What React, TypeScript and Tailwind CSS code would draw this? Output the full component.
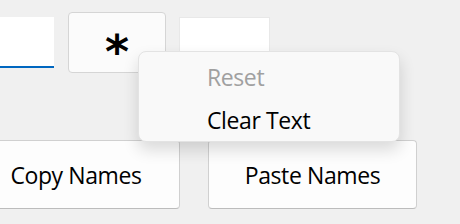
export default function App() {
  return (
    <div
      className="relative h-[224px] w-[460px] overflow-hidden bg-[#f0f0f0] text-black"
      style={{ fontFamily: '"Open Sans", "Noto Sans", sans-serif' }}
    >
      {/* top row */}
      <div className="flex items-start pt-[12px]">
        <div className="mt-[5px] h-[51px] w-[54px] border-b-2 border-[#0067c0] bg-white" />
        <button className="ml-[14px] flex h-[61px] w-[98px] items-start justify-center rounded-[4px] border border-[#d5d5d5] bg-[#fbfbfb]">
          <span className="mt-[16px] text-[46px] font-bold leading-none" style={{ fontFamily: '"DejaVu Sans", sans-serif' }}>*</span>
        </button>
        <div className="ml-[13px] mt-[5px] h-[51px] w-[91px] border border-[#e8e8e8] bg-white" />
      </div>

      {/* bottom row */}
      <div className="ml-[-28px] mt-[67px] flex gap-[28px] text-[23px] tracking-[-0.4px]">
        <button className="flex h-[69px] w-[208px] items-center justify-center rounded-[4px] border border-[#d0d0d0] border-b-[#bcbcbc] bg-[#fdfdfd] pt-[1px]">
          Copy Names
        </button>
        <button className="flex h-[69px] w-[209px] items-center justify-center rounded-[4px] border border-[#d0d0d0] border-b-[#bcbcbc] bg-[#fdfdfd] pt-[1px]">
          Paste Names
        </button>
      </div>

      {/* context menu */}
      <div className="absolute left-[138px] top-[51px] flex h-[91px] w-[262px] flex-col rounded-[8px] border border-[#e3e3e3] bg-[#f9f9f9] pt-[4px] text-[23px] tracking-[-0.4px] shadow-[0_8px_16px_rgba(0,0,0,0.14)]">
        <div className="flex h-[43px] items-center pl-[68px] text-[#a0a0a0]">Reset</div>
        <div className="flex h-[43px] items-center pl-[68px]">Clear Text</div>
      </div>
    </div>
  );
}
